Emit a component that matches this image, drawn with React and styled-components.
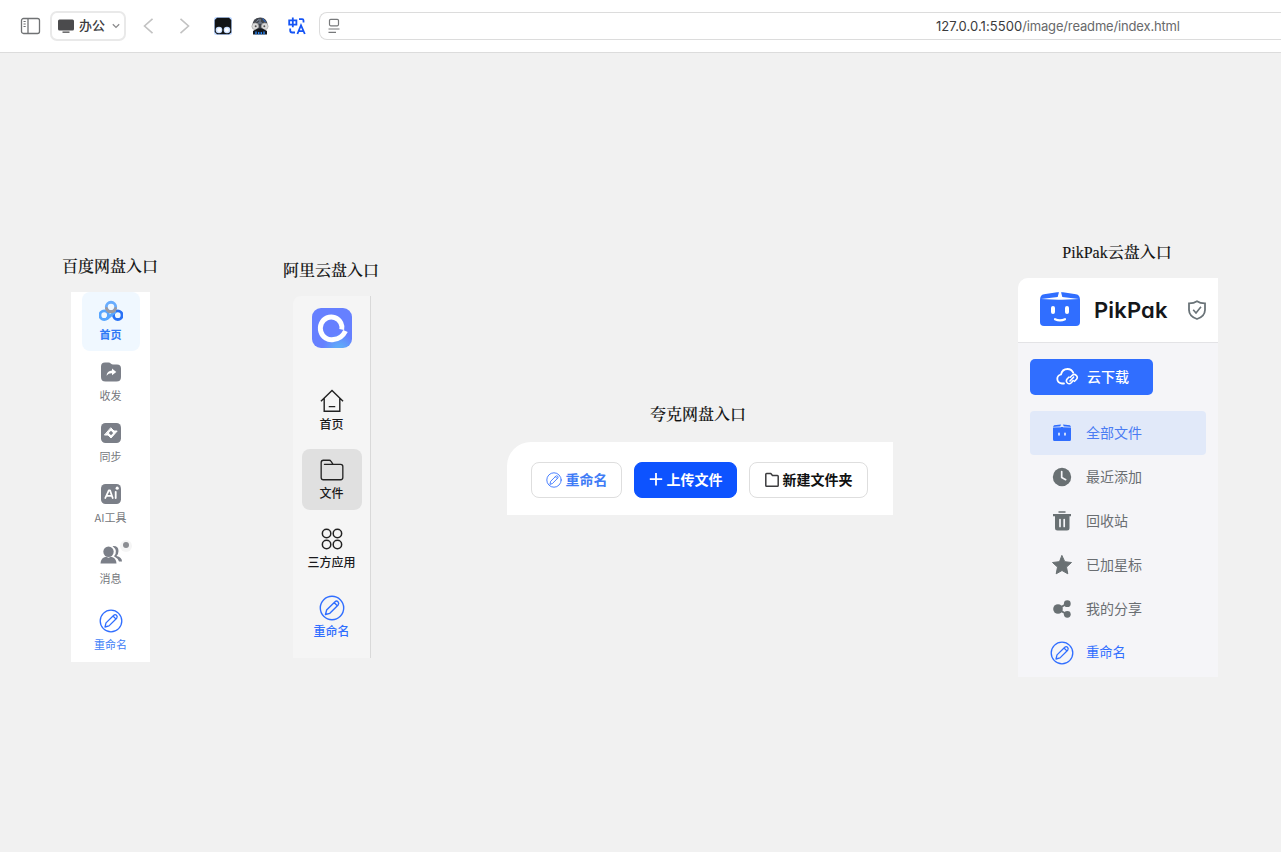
import React from "react";
import styled, { createGlobalStyle } from "styled-components";

const Global = createGlobalStyle`
  *, *::before, *::after { box-sizing: border-box; }
  body {
    margin: 0;
    background: #f1f1f1;
    font-family: "Liberation Sans", "Noto Sans CJK SC", sans-serif;
  }
  svg { display: block; flex: none; }
`;

const Page = styled.div`
  width: 100%;
  height: 852px;
  overflow: hidden;
  display: flex;
  flex-direction: column;
`;

/* ---------- browser toolbar ---------- */

const Toolbar = styled.header`
  height: 53px;
  flex: none;
  display: flex;
  align-items: center;
  padding: 0 0 1px 20px;
  background: #fff;
  border-bottom: 1px solid #dcdcdc;
`;

const ProfileButton = styled.button`
  width: 76px;
  height: 30px;
  flex: none;
  margin: 0 16px 0 9px;
  padding: 0 0 0 6px;
  display: flex;
  align-items: center;
  border: 2px solid #e9e9e9;
  border-radius: 7px;
  background: #fff;
  color: #3c3c3e;
  font: 500 13px "Noto Sans CJK SC", sans-serif;
`;

const ProfileName = styled.span`
  margin: 0 7px 0 5px;
  padding-bottom: 2px;
  line-height: 20px;
  white-space: nowrap;
`;

const ToolIcon = styled.span`
  margin-right: ${(p) => p.$after}px;
`;

const AddressBar = styled.div`
  flex: 1;
  height: 28px;
  padding-left: 8px;
  display: flex;
  align-items: center;
  border: 1px solid #dcdcdc;
  border-right: 0;
  border-radius: 8px 0 0 8px;
`;

const Address = styled.span`
  margin-left: 596px;
  padding-top: 1px;
  white-space: nowrap;
  color: #68696b;
  font: 13px/18px Inter, sans-serif;
  letter-spacing: -0.16px;
`;

const Host = styled.span`
  color: #3a3b3d;
  letter-spacing: 0.06px;
`;

/* ---------- showcase ---------- */

const Showcase = styled.main`
  flex: 1;
  padding: 15px 0 0 62px;
  display: flex;
  align-items: center;
`;

const Entry = styled.section`
  width: ${(p) => p.$width}px;
  margin-left: ${(p) => p.$before || 0}px;
  flex: none;
  display: flex;
  flex-direction: column;
  align-items: center;
`;

const EntryTitle = styled.h2`
  margin: 0 ${(p) => p.$shift || 0}px ${(p) => p.$gap || 16}px 0;
  height: 18px;
  white-space: nowrap;
  color: #111;
  font: 500 16px/18px "Liberation Serif", "Noto Serif CJK SC", "Noto Sans CJK SC", serif;
  -webkit-text-stroke: 0.12px #111;
`;

const BaiduPanel = styled.nav`
  width: 79px;
  height: 370px;
  padding-left: 1px;
  background: #fff;
  display: flex;
  flex-direction: column;
  align-items: center;
  gap: 2px;
`;

const BaiduItem = styled.div`
  position: relative;
  width: 58px;
  height: 59px;
  padding-top: ${(p) => (p.$active ? 8 : 7)}px;
  margin-top: ${(p) => p.$offset || 0}px;
  display: flex;
  flex-direction: column;
  align-items: center;
  border-radius: 8px;
  background: ${(p) => (p.$active ? "#f0f8ff" : "transparent")};
  color: ${(p) => p.$color || "#75777c"};
  font: ${(p) => (p.$active ? 700 : 400)} 11px/16px "Noto Sans CJK SC", sans-serif;
  white-space: nowrap;
  svg { margin-bottom: ${(p) => (p.$active ? 2 : 3)}px; }
`;

const Dot = styled.i`
  position: absolute;
  top: 6px;
  right: 11px;
  width: 6px;
  height: 6px;
  border-radius: 50%;
  background: #8b8d92;
  box-shadow: 0 1px 0 3px #f5f5f5;
`;

const AliPanel = styled.nav`
  width: 78px;
  height: 362px;
  padding: 12px 0 0 2px;
  margin-left: 1px;
  background: #f5f5f5;
  border-right: 1px solid #d9d9d9;
  border-radius: 8px 0 0 0;
  display: flex;
  flex-direction: column;
  align-items: center;
`;

const AliItems = styled.div`
  margin-top: 32px;
  display: flex;
  flex-direction: column;
  gap: 8px;
`;

const AliItem = styled.div`
  width: 60px;
  height: 61px;
  padding-top: 8px;
  display: flex;
  flex-direction: column;
  align-items: center;
  border-radius: 8px;
  background: ${(p) => (p.$active ? "#e0e0e0" : "transparent")};
  color: ${(p) => p.$color || "#1a1a1c"};
  font: 500 12px/18px "Noto Sans CJK SC", sans-serif;
  white-space: nowrap;
  svg { margin-bottom: 1px; }
`;

const AliLabel = styled.span`
  margin-right: 1px;
`;

const QuarkPanel = styled.div`
  width: 386px;
  height: 73px;
  padding: 3px 0 0 24px;
  background: #fff;
  border-radius: 24px 0 0 0;
  display: flex;
  align-items: center;
  gap: 12px;
`;

const QuarkButton = styled.button`
  width: ${(p) => p.$width}px;
  height: 36px;
  padding: 0;
  display: flex;
  align-items: center;
  justify-content: center;
  gap: 4px;
  border: 1px solid ${(p) => (p.$primary ? "#0d53ff" : "#dedede")};
  border-radius: 8px;
  background: ${(p) => (p.$primary ? "#0d53ff" : "#fff")};
  color: ${(p) => p.$color || "#111"};
  font: 700 14px/20px "Noto Sans CJK SC", sans-serif;
  white-space: nowrap;
`;

const ButtonText = styled.span`
  padding-bottom: 2px;
`;

const PikPanel = styled.div`
  width: 200px;
  height: 399px;
  background: #f5f5f8;
  border-radius: 10px 0 0 0;
  overflow: hidden;
`;

const PikHeader = styled.div`
  height: 65px;
  padding: 0 11px 0 22px;
  display: flex;
  align-items: center;
  background: #fff;
  border-bottom: 1px solid #e3e3e6;
`;

const PikBrand = styled.span`
  width: 75px;
  margin: 0 18px 0 14px;
  color: #15161a;
  font: 600 22px/28px Inter, sans-serif;
  font-feature-settings: "cv11";
  letter-spacing: 0.15px;
`;

const PikBody = styled.div`
  padding: 16px 12px 0;
`;

const DownloadButton = styled.button`
  width: 123px;
  height: 36px;
  margin-bottom: 16px;
  padding: 0 0 0 26px;
  display: flex;
  align-items: center;
  gap: 8px;
  border: 0;
  border-radius: 5px;
  background: #306eff;
  color: #fff;
  font: 500 14px/20px "Noto Sans CJK SC", sans-serif;
`;

const PikItem = styled.div`
  height: 44px;
  padding-left: 20px;
  display: flex;
  align-items: center;
  gap: 12px;
  border-radius: 4px;
  background: ${(p) => (p.$active ? "#e1e9f9" : "transparent")};
  color: ${(p) => p.$color || "#6a6e72"};
  font: 400 ${(p) => p.$size || 14}px/20px "Noto Sans CJK SC", sans-serif;
`;

/* ---------- icons ---------- */

const BLUE = "#306eff";
const SLATE = "#7b7f88";
const GRAY = "#697073";

function Svg({ w = 24, h, children, ...rest }) {
  return (
    <svg width={w} height={h || w} viewBox="0 0 24 24" fill="none" strokeLinecap="round" strokeLinejoin="round" {...rest}>
      {children}
    </svg>
  );
}

const RenameIcon = ({ size = 24, weight = 1.3 }) => (
  <Svg w={size} stroke={BLUE} strokeWidth={weight}>
    <circle cx="12" cy="12" r="10.8" />
    <path d="M6 18 7 13.900 14.800 6.200Q16.200 5 17.500 6.300T17.700 9.200L10 16.900ZM14.200 7.200 16.600 9.600" />
  </Svg>
);

const SidebarIcon = () => (
  <svg width="21" height="18" viewBox="0 0 21 18" fill="none" stroke="#707274">
    <rect x="1.5" y="1.5" width="18" height="15" rx="2" strokeWidth="1.3" />
    <path d="M8 1.5v15" strokeWidth="1.3" />
    <path d="M3.5 4.5h2.2M3.5 7h2.2M3.5 9.5h2.2" />
  </svg>
);

const MonitorIcon = () => (
  <svg width="16" height="14" viewBox="0 0 16 14" fill="#4b4b4d">
    <rect x="0" y="0.5" width="16" height="11" rx="1.5" />
    <rect x="4.5" y="12.5" width="7" height="1.3" />
  </svg>
);

const DownIcon = () => (
  <svg width="8" height="6" viewBox="0 0 8 6" fill="none" stroke="#8b8b8d" strokeWidth="1.3">
    <path d="M.8 1.2 4 4.4 7.2 1.2" />
  </svg>
);

const Chevron = ({ d }) => (
  <svg width="11" height="16" viewBox="0 0 11 16" fill="none" stroke="#c2c2c2" strokeWidth="1.6">
    <path d={d} />
  </svg>
);

const GogglesIcon = () => (
  <svg width="18" height="18" viewBox="0 0 18 18">
    <rect width="18" height="18" rx="2.5" fill="#bdd6ff" />
    <path d="M3 .7h12L17.3 3v12.5L15 17.3H3L.7 15V3Z" fill="#121416" />
    <circle cx="5" cy="13" r="3.3" fill="#c9deff" />
    <circle cx="13" cy="13" r="3.3" fill="#c9deff" />
    <circle cx="5.2" cy="13" r="2.1" fill="#fff" />
    <circle cx="12.8" cy="13" r="2.1" fill="#fff" />
  </svg>
);

const RobotIcon = () => (
  <svg width="18" height="18" viewBox="0 0 18 18">
    <path d="M1.500 8Q2 .7 9 .5T16.500 8L15 12H3Z" fill="#42464d" />
    <path d="M5.500 4.500 8 2.500M9 2v3.500M7 6h4" stroke="#8795a8" fill="none" />
    <path d="M11.500 1.500 14.500 5" stroke="#236bdf" />
    <circle cx="4.200" cy="9.300" r="3.300" fill="#dcdcdc" stroke="#aaa" strokeWidth=".8" />
    <circle cx="13.800" cy="9.300" r="3.300" fill="#dcdcdc" stroke="#aaa" strokeWidth=".8" />
    <circle cx="4.700" cy="9.300" r="1" fill="#555" />
    <circle cx="13.300" cy="9.300" r="1" fill="#555" />
    <path d="M2 17.500V14L6.500 11.500h5L16 14v3.500Z" fill="#15181d" />
    <path d="M5 14.500v3M7.700 15v2.500M10.300 15v2.500M13 14.500v3" stroke="#2b8cff" strokeWidth="1.300" />
  </svg>
);

const TranslateIcon = () => (
  <svg width="18" height="18" viewBox="0 0 18 18" fill="none" stroke="#1554f5" strokeWidth="1.800">
    <path d="M1.200 3.300h7.200v4.300H1.200ZM4.800.6v9.600M11 2.200h3.200q1.300 0 1.300 1.300v2M2.200 11.500V13.500q0 2 2 2H7M9.400 17 13 8.200l3.800 8.800M10.600 14.200h4.800" />
  </svg>
);

const PageIcon = () => (
  <svg width="12" height="16" viewBox="0 0 12 16" fill="none" stroke="#77797b" strokeWidth="1.2">
    <rect x="1.500" y="1.300" width="9" height="6.500" rx="1.200" />
    <path d="M.5 11h11M.5 14.300h7.500" />
  </svg>
);

const BaiduLogo = () => (
  <Svg fill="none">
    <circle cx="5.200" cy="15.200" r="4.300" stroke="#57a6ff" strokeWidth="2.900" />
    <circle cx="18.800" cy="15.200" r="4.300" stroke="#2871f6" strokeWidth="2.900" />
    <path d="M8.300 18.300 15.800 12.200" stroke="#57a6ff" strokeWidth="2.900" />
    <circle cx="12" cy="7" r="4.700" stroke="#68adff" strokeWidth="2.900" />
    <path d="M7.500 8.500Q8.500 11.700 12 11.700T16.500 8.500" stroke="#9b9aa3" strokeWidth="2.900" />
  </Svg>
);

const ShareFolderIcon = () => (
  <Svg>
    <path d="M2 6.500Q2 2.500 6 2.500h3.500q1.500 0 2.500 1.200.7.800 2 .8H18Q22 4.500 22 8.500V17Q22 21.500 17.500 21.500h-11Q2 21.500 2 17Z" fill={SLATE} />
    <path d="M7.500 15.700Q8 10.900 13 10.500V8.600L17.300 12 13 15.300v-2Q9.700 13 7.500 15.700Z" fill="#fff" />
  </Svg>
);

const SyncIcon = () => (
  <Svg>
    <rect x="2" y="2" width="20" height="20" rx="4.500" fill={SLATE} />
    <path d="m12 7 3 3h3.200L12 17l-3-3H5.800Z" fill="#fff" stroke="#fff" strokeWidth="1" />
    <path d="m12 9.800 2.200 2.200L12 14.200 9.800 12Z" fill={SLATE} />
  </Svg>
);

const AiIcon = () => (
  <Svg>
    <rect x="2" y="2" width="20" height="20" rx="4.500" fill={SLATE} />
    <path d="M6.300 16 9.800 8.300h1.200l2.700 7.700M8.200 13.800h4.500M16.700 9.800V16" stroke="#fff" strokeWidth="1.800" />
    <circle cx="18.200" cy="6.200" r="1.600" fill="#fff" />
  </Svg>
);

const PeopleIcon = () => (
  <Svg fill={SLATE}>
    <path d="M13.500 3q6-.5 6 5 0 3-2 5 5.500 1.200 5.500 5.500h-3Q19 15.500 15 13.300q4.500-5.300-1.500-10.300Z" />
    <circle cx="9.500" cy="8.700" r="5.200" />
    <path d="M1.500 20.500Q2 14.300 7 13.700l2.500 1 2.500-1q5 .6 5.500 6.800Z" />
  </Svg>
);

const AliLogo = () => (
  <svg width="40" height="40" viewBox="0 0 40 40">
    <defs>
      <radialGradient id="ali" cx=".68" cy="1.050" r=".42">
        <stop offset=".25" stopColor="#5faaf9" />
        <stop offset="1" stopColor="#6680ff" />
      </radialGradient>
    </defs>
    <rect width="40" height="40" rx="9" fill="url(#ali)" />
    <path d="M29.700 21.500Q30.500 18.300 28.800 14.800A10.900 11.400 0 1 0 21.500 31.500Q29.500 31 33.500 23" fill="none" stroke="#fff" strokeWidth="5" />
  </svg>
);

const HomeIcon = () => (
  <Svg w={26} stroke="#222" strokeWidth="1.300" strokeLinecap="butt" strokeLinejoin="miter">
    <path d="M1.800 12.200 12 2.300l10.200 9.900M4.800 9.500v12h14.400v-12M9 17.200h6" />
  </Svg>
);

const FolderIcon = () => (
  <Svg w={26} stroke="#222" strokeWidth="1.200">
    <path d="M2 5Q2 3 4 3h5.500q1 0 1.500.8L13 6.800H20q2 0 2 2V19q0 2-2 2H4q-2 0-2-2ZM5 6.800h8" />
  </Svg>
);

const PlainFolderIcon = () => (
  <svg width="14" height="16" viewBox="0 0 14 16" fill="none" stroke="#3c3c3e" strokeWidth="1.500" strokeLinejoin="round">
    <path d="M.8 2.200q0-.8.8-.8h4.200l1.700 2h4.900q.8 0 .8.800v9.200q0 .8-.8.800H1.600q-.8 0-.8-.8Z" />
  </svg>
);

const AppsIcon = () => (
  <Svg w={26} stroke="#222" strokeWidth="1.400">
    {[[7, 7], [17, 7], [7, 17], [17, 17]].map(([x, y]) => (
      <circle key={`${x}-${y}`} cx={x} cy={y} r="3.900" />
    ))}
  </Svg>
);

const PlusIcon = () => (
  <svg width="14" height="16" viewBox="0 0 14 16" stroke="#fff" strokeWidth="1.800">
    <path d="M7 1v12.400M.8 7.200h12.400" />
  </svg>
);

const PikLogo = () => (
  <svg width="40" height="36" viewBox="0 0 40 36">
    <path d="M0 8Q0 2.800 4 2.200L17 .3h6l13 1.900q4 .6 4 5.800v22q0 4-4 4H4q-4 0-4-4Z" fill={BLUE} />
    <path d="M19 0h2l1.300 5L39 7 22 7.800H18L1 7l16.700-2Z" fill="#fff" />
    <rect x="11" y="14" width="4" height="8" rx="2" fill="#fff" />
    <rect x="25" y="14" width="4" height="8" rx="2" fill="#fff" />
    <path d="M15 27.200q5 2.500 10 0" stroke="#fff" strokeWidth="2.200" strokeLinecap="round" fill="none" />
  </svg>
);

const ShieldIcon = () => (
  <svg width="20" height="20" viewBox="0 0 20 20" fill="none" stroke="#6a7378" strokeWidth="1.800">
    <path d="M10 1.300Q13 3.300 18 3.400V10Q17.800 16.500 10 19 2.200 16.500 2 10V3.400Q7 3.300 10 1.300Z" />
    <path d="m6.200 9.800 2.800 3.300 5-6.300" strokeWidth="1.600" />
  </svg>
);

const CloudLinkIcon = () => (
  <svg width="23" height="20" viewBox="0 0 23 20" fill="none" stroke="#fff" strokeWidth="1.800" strokeLinecap="round" strokeLinejoin="round">
    <path d="M8 16.500H6Q1.500 16 1.300 12 1.200 8.500 5 7.500 6.200 2 11.500 2q4 0 5.700 3.700" />
    <path d="M14.300 10.200 16.200 8.300q2-1.700 4 0t.3 4L18.500 14.300M17.200 13.500 15.300 15.700q-2 2-3.900.3t-.3-4l1.700-1.800M14 14l3.500-3.800" strokeWidth="1.600" />
  </svg>
);

const BoxIcon = () => (
  <Svg>
    <path d="M3 6h18v12.500q0 1.500-1.500 1.500h-15Q3 20 3 18.500ZM4 4.300l7-.8-.8 2L3 6ZM13 3.500l7 .8L21 6l-7.200-.5Z" fill={BLUE} />
    <path d="M3 6.400 11 6l1-2 1 2 8 .4" stroke="#e1e9f9" strokeWidth=".6" />
    <path d="M9 12.300v1.800M15 12.300v1.800" stroke="#fff" strokeWidth="1.500" />
  </Svg>
);

const ClockIcon = () => (
  <Svg>
    <circle cx="12" cy="12" r="9.200" fill={GRAY} />
    <path d="M11.700 6.500v6l4 2.200" stroke="#f5f5f8" strokeWidth="1.700" />
  </Svg>
);

const TrashIcon = () => (
  <Svg fill={GRAY}>
    <path d="M8.500 2.300h7v1.500h-7ZM3 5h18v2.200h-1.500V19q0 2.500-2.500 2.500H7.500Q5 21.500 5 19V7.200H3Z" />
    <path d="M10 10.500v7M14.200 10.500v7" stroke="#f5f5f8" strokeWidth="1.700" />
  </Svg>
);

const StarIcon = () => (
  <Svg fill={GRAY} stroke={GRAY} strokeWidth="1">
    <path d="m12 2.700 2.800 6 6.700.8-5 4.600 1.300 6.700-5.800-3.300-5.800 3.300 1.300-6.700-5-4.600 6.700-.8Z" />
  </Svg>
);

const ShareIcon = () => (
  <Svg fill={GRAY}>
    <path d="m8 12 9-5.500M8 12l9 5.500" stroke={GRAY} strokeWidth="2" />
    <circle cx="8" cy="12" r="4.800" />
    <circle cx="17.300" cy="6.700" r="3.400" />
    <circle cx="17.300" cy="17.300" r="3.400" />
  </Svg>
);

/* ---------- data ---------- */

const baiduItems = [
  { label: "首页", icon: <BaiduLogo />, active: true, color: "#2f78f6" },
  { label: "收发", icon: <ShareFolderIcon /> },
  { label: "同步", icon: <SyncIcon /> },
  { label: "AI工具", icon: <AiIcon /> },
  { label: "消息", icon: <PeopleIcon />, dot: true },
  { label: "重命名", icon: <RenameIcon />, color: "#3f80f7", offset: 5 },
];

const aliItems = [
  { label: "首页", icon: <HomeIcon /> },
  { label: "文件", icon: <FolderIcon />, active: true },
  { label: "三方应用", icon: <AppsIcon /> },
  { label: "重命名", icon: <RenameIcon size={26} />, color: BLUE },
];

const pikItems = [
  { label: "全部文件", icon: <BoxIcon />, active: true, color: "#4a7cf3" },
  { label: "最近添加", icon: <ClockIcon /> },
  { label: "回收站", icon: <TrashIcon /> },
  { label: "已加星标", icon: <StarIcon /> },
  { label: "我的分享", icon: <ShareIcon /> },
  { label: "重命名", icon: <RenameIcon />, color: BLUE, size: 13.3 },
];

export default function App() {
  return (
    <Page>
      <Global />
      <Toolbar>
        <SidebarIcon />
        <ProfileButton>
          <MonitorIcon />
          <ProfileName>办公</ProfileName>
          <DownIcon />
        </ProfileButton>
        <ToolIcon $after={26}><Chevron d="M10.500.8 2.500 8l8 7.200" /></ToolIcon>
        <ToolIcon $after={24}><Chevron d="m1.500.8 8 7.200-8 7.200" /></ToolIcon>
        <ToolIcon $after={19}><GogglesIcon /></ToolIcon>
        <ToolIcon $after={19}><RobotIcon /></ToolIcon>
        <ToolIcon $after={13}><TranslateIcon /></ToolIcon>
        <AddressBar>
          <PageIcon />
          <Address><Host>127.0.0.1:5500</Host>/image/readme/index.html</Address>
        </AddressBar>
      </Toolbar>
      <Showcase>
        <Entry $width={96}>
          <EntryTitle>百度网盘入口</EntryTitle>
          <BaiduPanel>
            {baiduItems.map((it) => (
              <BaiduItem key={it.label} $active={it.active} $color={it.color} $offset={it.offset}>
                {it.icon}
                {it.label}
                {it.dot && <Dot />}
              </BaiduItem>
            ))}
          </BaiduPanel>
        </Entry>
        <Entry $width={96} $before={125}>
          <EntryTitle>阿里云盘入口</EntryTitle>
          <AliPanel>
            <AliLogo />
            <AliItems>
              {aliItems.map((it) => (
                <AliItem key={it.label} $active={it.active} $color={it.color}>
                  {it.icon}
                  <AliLabel>{it.label}</AliLabel>
                </AliItem>
              ))}
            </AliItems>
          </AliPanel>
        </Entry>
        <Entry $width={386} $before={128}>
          <EntryTitle $shift={4} $gap={18}>夸克网盘入口</EntryTitle>
          <QuarkPanel>
            <QuarkButton $width={91} $color="#3f7cf6"><RenameIcon size={16} weight={1.3} /><ButtonText>重命名</ButtonText></QuarkButton>
            <QuarkButton $width={103} $primary $color="#fff"><PlusIcon /><ButtonText>上传文件</ButtonText></QuarkButton>
            <QuarkButton $width={119}><PlainFolderIcon /><ButtonText>新建文件夹</ButtonText></QuarkButton>
          </QuarkPanel>
        </Entry>
        <Entry $width={200} $before={125}>
          <EntryTitle $shift={2} $gap={16}>PikPak云盘入口</EntryTitle>
          <PikPanel>
            <PikHeader>
              <PikLogo />
              <PikBrand>PikPak</PikBrand>
              <ShieldIcon />
            </PikHeader>
            <PikBody>
              <DownloadButton><CloudLinkIcon /><ButtonText>云下载</ButtonText></DownloadButton>
              {pikItems.map((it) => (
                <PikItem key={it.label} $active={it.active} $color={it.color} $size={it.size}>
                  {it.icon}
                  <ButtonText>{it.label}</ButtonText>
                </PikItem>
              ))}
            </PikBody>
          </PikPanel>
        </Entry>
      </Showcase>
    </Page>
  );
}
